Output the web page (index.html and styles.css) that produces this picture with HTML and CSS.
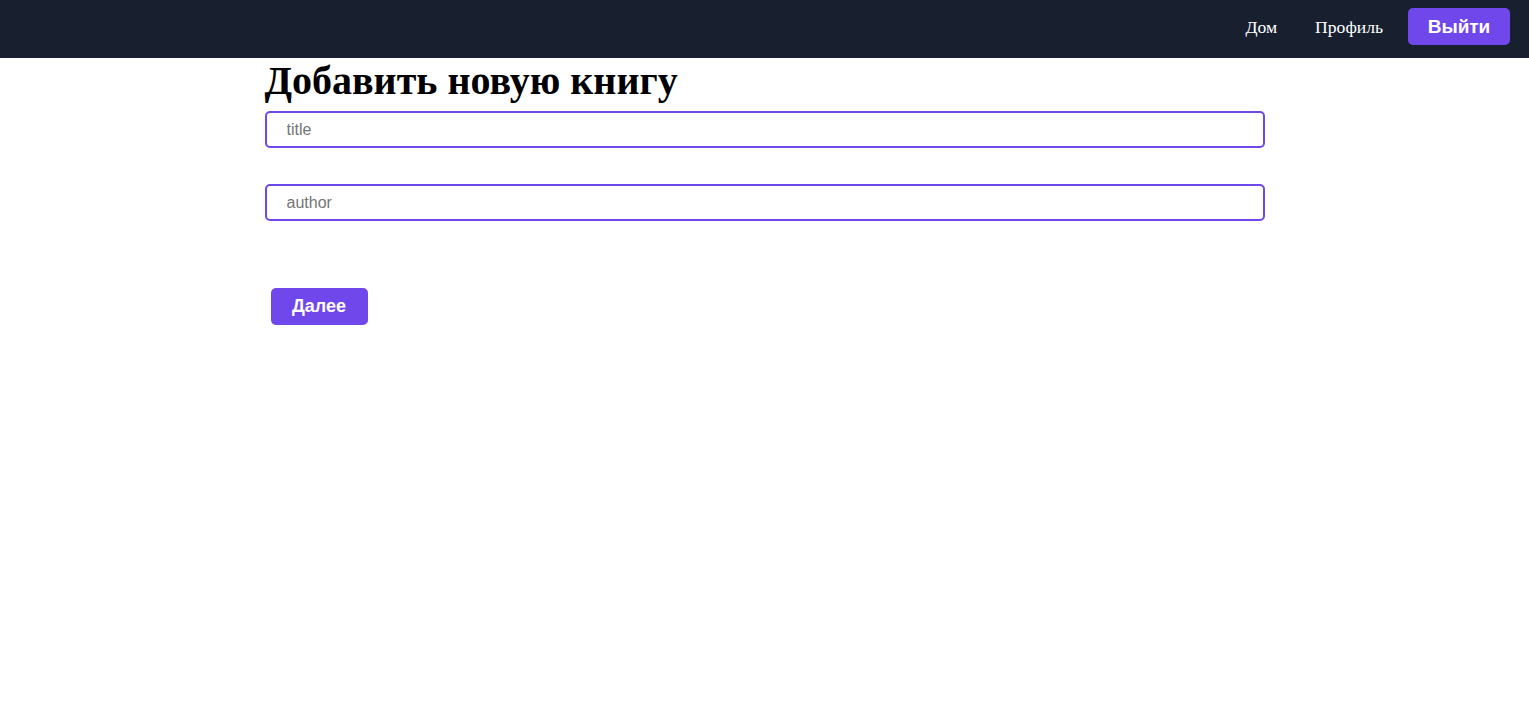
FILE: index.html
```html
<!DOCTYPE html>
<html lang="ru">
<head>
<meta charset="utf-8">
<title>Добавить новую книгу</title>
<link rel="stylesheet" href="styles.css">
</head>
<body>
<nav class="navbar">
  <a class="nav-link" href="#">Дом</a>
  <a class="nav-link" href="#">Профиль</a>
  <button class="btn btn-logout">Выйти</button>
</nav>
<main class="container">
  <h1 class="title">Добавить новую книгу</h1>
  <form class="form">
    <input class="field" type="text" placeholder="title">
    <input class="field" type="text" placeholder="author">
    <div class="actions">
      <button class="btn btn-next" type="button">Далее</button>
    </div>
  </form>
</main>
</body>
</html>
```
FILE: styles.css
```css
* { box-sizing: border-box; }
html, body { margin: 0; padding: 0; background: #fff; }
body { font-family: "Liberation Serif", "Times New Roman", serif; color: #000; }

.navbar {
  height: 58px;
  background: #18202f;
  display: flex;
  align-items: center;
  justify-content: flex-end;
  padding: 0 19px 0 0;
}
.nav-link {
  color: #fff;
  text-decoration: none;
  font-size: 17.6px;
  margin-right: 38px;
  margin-top: -4px;
}
.nav-link + .nav-link { margin-right: 25px; }

.btn {
  background: #7047eb;
  color: #fff;
  border: none;
  border-radius: 5px;
  font-family: "Liberation Sans", Arial, sans-serif;
  font-weight: bold;
  cursor: pointer;
}
.btn-logout {
  width: 102px;
  height: 37px;
  font-size: 19px;
  margin-top: -5px;
}

.container {
  width: 1000px;
  margin: 0 auto;
}
.title {
  margin: 0 0 7px 0;
  font-size: 40px;
  font-weight: bold;
  line-height: 46px;
}
.form { display: flex; flex-direction: column; gap: 36px; }
.field {
  width: 1000px;
  height: 37px;
  border: 2px solid #7047eb;
  border-radius: 5px;
  padding: 0 20px;
  font-family: "Liberation Sans", Arial, sans-serif;
  font-size: 16px;
  outline: none;
}
.field::placeholder { color: #757575; }
.actions { padding: 31px 0 0 6px; }
.btn-next {
  width: 97px;
  height: 37px;
  font-size: 18px;
}
```
